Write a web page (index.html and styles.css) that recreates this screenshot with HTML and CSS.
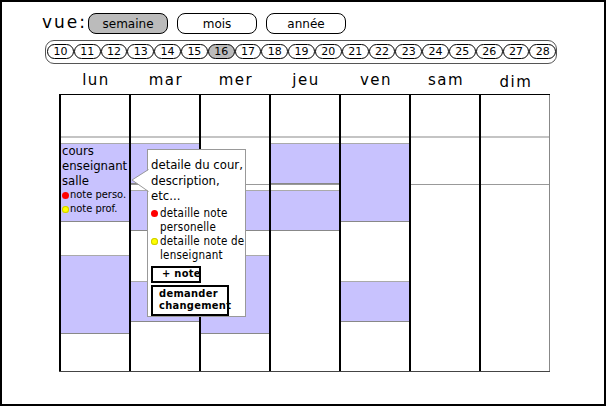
FILE: index.html
```html
<!DOCTYPE html>
<html lang="fr">

<head>
  <meta charset="UTF-8">
  <title>Emploi du temps - semaine</title>
  <link rel="stylesheet" href="styles.css">
</head>

<body>
  <div class="frame">
    <div class="view-bar">
      <span class="view-label">vue:</span>
      <button class="view-btn active">semaine</button>
      <button class="view-btn">mois</button>
      <button class="view-btn">année</button>
    </div>

    <div class="day-strip">
      <span class="day-pill">10</span>
      <span class="day-pill">11</span>
      <span class="day-pill">12</span>
      <span class="day-pill">13</span>
      <span class="day-pill">14</span>
      <span class="day-pill">15</span>
      <span class="day-pill active">16</span>
      <span class="day-pill">17</span>
      <span class="day-pill">18</span>
      <span class="day-pill">19</span>
      <span class="day-pill">20</span>
      <span class="day-pill">21</span>
      <span class="day-pill">22</span>
      <span class="day-pill">23</span>
      <span class="day-pill">24</span>
      <span class="day-pill">25</span>
      <span class="day-pill">26</span>
      <span class="day-pill">27</span>
      <span class="day-pill">28</span>
    </div>

    <div class="week-head">
      <span>lun</span>
      <span>mar</span>
      <span>mer</span>
      <span>jeu</span>
      <span>ven</span>
      <span>sam</span>
      <span class="low">dim</span>
    </div>

    <div class="week">
      <div class="hour-line line-a"></div>
      <div class="hour-line line-b"></div>

      <div class="day">
        <div class="event" style="top: 48px; height: 79px;">
          <div class="event-text">cours<br>enseignant<br>salle</div>
          <div class="note"><i class="dot red"></i>note perso.</div>
          <div class="note"><i class="dot yellow"></i>note prof.</div>
        </div>
        <div class="event" style="top: 160px; height: 79px;"></div>
      </div>
      <div class="day">
        <div class="event" style="top: 48px; height: 41px;"></div>
        <div class="event" style="top: 95px; height: 41px;"></div>
        <div class="event" style="top: 186px; height: 41px;"></div>
      </div>
      <div class="day">
        <div class="event" style="top: 95px; height: 41px;"></div>
        <div class="event" style="top: 160px; height: 79px;"></div>
      </div>
      <div class="day">
        <div class="event" style="top: 48px; height: 41px;"></div>
        <div class="event" style="top: 95px; height: 41px;"></div>
      </div>
      <div class="day">
        <div class="event" style="top: 48px; height: 79px;"></div>
        <div class="event" style="top: 186px; height: 41px;"></div>
      </div>
      <div class="day"></div>
      <div class="day last"></div>
    </div>

    <!-- detail bubble for the selected course -->
    <div class="popup">
      <svg class="popup-tail" width="18" height="24" viewBox="0 0 18 24">
        <polygon points="18,0.5 1,11 18,22.5" fill="#fff" />
        <polyline points="17.5,0.5 1,11 17.5,22.5" fill="none" stroke="#999" stroke-width="1" />
      </svg>
      <div class="popup-title">detaile du cour,<br>description,<br>etc...</div>
      <div class="popup-note"><i class="dot red"></i><span>detaille note personelle</span></div>
      <div class="popup-note"><i class="dot yellow"></i><span>detaille note de lenseignant</span></div>
      <button class="box-btn add-note">+ note</button>
      <button class="box-btn ask">demander changement</button>
    </div>
  </div>
</body>

</html>
```

FILE: styles.css
```css
body {
  margin: 0;
  background-color: #fff;
  color: #000;
  font-family: "DejaVu Sans Condensed", "DejaVu Sans", sans-serif;
}

.frame {
  position: relative;
  width: 606px;
  height: 406px;
  border: 2px solid #000;
  box-sizing: border-box;
}

.view-bar {
  display: flex;
  align-items: center;
  margin-top: 11px;
  padding-left: 40px;
  height: 21px;
}

.view-label {
  font-family: "DejaVu Sans", sans-serif;
  font-size: 17px;
  letter-spacing: 2px;
  margin-right: 1px;
  margin-top: -3px;
}

.view-btn {
  width: 80px;
  height: 21px;
  margin: 0 9px 0 0;
  padding: 0;
  border: 1px solid #000;
  border-radius: 8px;
  background-color: #fff;
  font-family: "DejaVu Sans", sans-serif;
  font-size: 12px;
  color: #000;
}

.view-btn.active {
  background-color: #bbb;
}

.day-strip {
  display: flex;
  width: 512px;
  height: 24px;
  margin: 6px 0 0 43px;
  padding: 3px 0 0 1px;
  border: 1px solid #555;
  border-radius: 9px;
  box-sizing: border-box;
}

.day-pill {
  flex: 1;
  height: 15px;
  border: 1px solid #000;
  border-radius: 8px;
  box-sizing: border-box;
  font-family: "DejaVu Sans", sans-serif;
  font-size: 11px;
  line-height: 13px;
  text-align: center;
}

.day-pill.active {
  background-color: #bbb;
}

.week-head {
  display: flex;
  height: 30px;
  margin-left: 59px;
  align-items: flex-end;
}

.week-head span {
  width: 70px;
  padding-bottom: 5px;
  text-align: center;
  font-family: "DejaVu Sans", sans-serif;
  font-size: 15px;
  letter-spacing: 1.5px;
}

.week-head span.low {
  padding-bottom: 3px;
}

.week {
  position: relative;
  display: flex;
  width: 491px;
  height: 278px;
  margin-left: 57px;
  border-top: 1px solid #000;
  border-bottom: 1px solid #444;
  box-sizing: border-box;
}

.hour-line {
  position: absolute;
  left: 0;
  right: 0;
  z-index: 0;
}

.line-a {
  top: 41px;
  height: 2px;
  background-color: #c4c4c4;
}

.line-b {
  top: 89px;
  height: 1px;
  background-color: #999;
}

.day {
  position: relative;
  z-index: 1;
  width: 70px;
  border-left: 2px solid #000;
  box-sizing: border-box;
}

.day.last {
  width: 71px;
  border-right: 1px solid #888;
}

.event {
  position: absolute;
  left: 0;
  right: 0;
  background-color: #c8c2fe;
  border-top: 1px solid #aaa;
  border-bottom: 1px solid #888;
  box-sizing: border-box;
  padding-left: 1px;
  white-space: nowrap;
}

.event-text {
  font-size: 13px;
  line-height: 15px;
  margin-top: -1px;
}

.note {
  display: flex;
  align-items: center;
  font-size: 11px;
  line-height: 14px;
}

.dot {
  display: inline-block;
  width: 7px;
  height: 7px;
  margin-right: 1px;
  border-radius: 50%;
  flex-shrink: 0;
}

.dot.red {
  background-color: #f00;
}

.dot.yellow {
  background-color: #ff0;
  box-shadow: inset 0 0 0 1px #cc0;
}

.popup {
  position: absolute;
  left: 145px;
  top: 147px;
  z-index: 2;
  width: 99px;
  height: 168px;
  padding: 7px 0 0 3px;
  background-color: #fff;
  border: 1px solid #999;
  box-sizing: border-box;
}

.popup-tail {
  position: absolute;
  left: -17px;
  top: 19px;
}

.popup-title {
  font-size: 13px;
  line-height: 15.5px;
  margin-bottom: 2px;
  white-space: nowrap;
}

.popup-note {
  display: flex;
  align-items: flex-start;
  font-size: 11.5px;
  line-height: 14px;
  width: 100px;
  letter-spacing: 0.2px;
}

.popup-note .dot {
  margin-top: 4px;
  margin-right: 2px;
}

.box-btn {
  display: block;
  margin: 0;
  padding: 0 0 0 6px;
  background-color: #fff;
  border: 2px solid #000;
  box-sizing: border-box;
  font-family: "DejaVu Sans Condensed", "DejaVu Sans", sans-serif;
  font-size: 11px;
  font-weight: bold;
  color: #000;
  text-align: left;
  letter-spacing: 0.3px;
}

.add-note {
  width: 50px;
  height: 17px;
  margin-top: 4px;
  padding-left: 9px;
  line-height: 12px;
  white-space: nowrap;
}

.ask {
  width: 78px;
  height: 31px;
  margin-top: 2px;
  line-height: 12px;
  white-space: normal;
  overflow: visible;
}
```
